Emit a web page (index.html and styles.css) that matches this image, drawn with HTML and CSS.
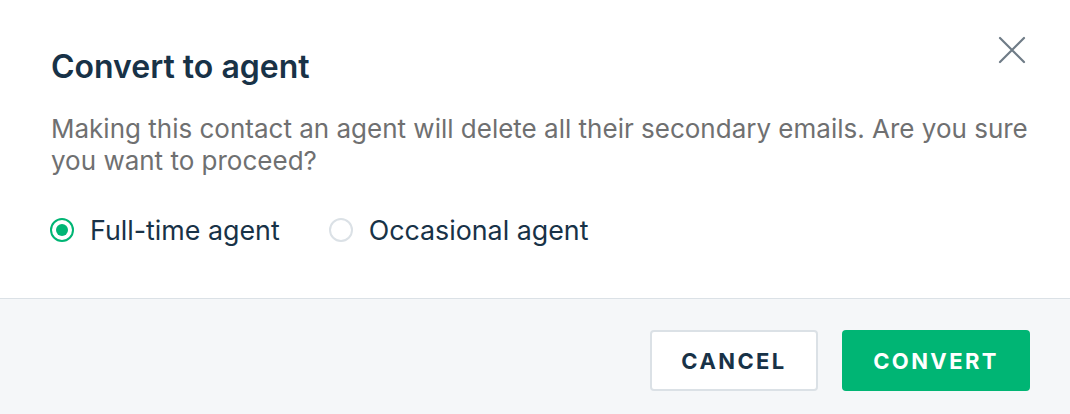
FILE: index.html
```html
<!DOCTYPE html>
<html>
	<head>
		<meta charset="UTF-8">
		<title>Convert to agent</title>
		<link rel="stylesheet" href="styles.css">
	</head>
	<body>
		<div class="modal">
			<div class="modal-body">
				<button class="close" type="button" aria-label="Close">
					<svg width="28" height="28" viewBox="0 0 28 28"><path d="M2 2L26 26M26 2L2 26" stroke="#6f7c87" stroke-width="2.2" stroke-linecap="round" fill="none"/></svg>
				</button>
				<h2 class="title">Convert to agent</h2>
				<p class="desc">Making this contact an agent will delete all their secondary emails. Are you sure you want to proceed?</p>
				<div class="options">
					<label class="option"><span class="radio checked"></span>Full-time agent</label>
					<label class="option"><span class="radio"></span>Occasional agent</label>
				</div>
			</div>
			<div class="modal-footer">
				<button class="btn btn-cancel" type="button">CANCEL</button>
				<button class="btn btn-primary" type="button">CONVERT</button>
			</div>
		</div>
	</body>
</html>
```

FILE: styles.css
```css
body{
	margin: 0;
	background: #fff;
	font-family: Inter, "Liberation Sans", sans-serif;
}
.modal{
	width: 1070px;
	height: 414px;
	display: flex;
	flex-direction: column;
}
.modal-body{
	position: relative;
	padding: 47px 36px 0 51px;
	height: 251px;
	border-bottom: 1px solid #dbe1e6;
}
.close{
	position: absolute;
	top: 36px;
	right: 44px;
	padding: 0;
	border: 0;
	background: none;
	width: 28px;
	height: 28px;
}
.title{
	margin: 0;
	font-size: 32px;
	font-weight: 600;
	line-height: 40px;
	color: #183247;
}
.desc{
	margin: 26px 0 0;
	font-size: 26px;
	line-height: 32px;
	color: #6f7071;
}
.options{
	display: flex;
	gap: 50px;
	margin-top: 35px;
}
.option{
	display: flex;
	align-items: center;
	gap: 16px;
	font-size: 26.8px;
	line-height: 36px;
	color: #183247;
}
.radio{
	width: 20px;
	height: 20px;
	border: 2px solid #dbe1e6;
	border-radius: 50%;
	display: flex;
	align-items: center;
	justify-content: center;
	margin-left: -1px;
}
.radio.checked{
	border-color: #00b574;
}
.radio.checked::after{
	content: "";
	width: 12px;
	height: 12px;
	border-radius: 50%;
	background: #00b574;
}
.modal-footer{
	flex: 1;
	background: #f5f7f9;
	display: flex;
	justify-content: flex-end;
	align-items: flex-start;
	gap: 24px;
	padding: 31px 40px 0 0;
}
.btn{
	height: 61px;
	border-radius: 4px;
	font-family: Inter, "Liberation Sans", sans-serif;
	font-size: 22px;
	font-weight: 700;
	letter-spacing: 2.4px;
	padding: 0;
}
.btn-cancel{
	width: 168px;
	background: #fff;
	border: 2px solid #dbe1e6;
	color: #183247;
}
.btn-primary{
	width: 188px;
	background: #00b574;
	border: 0;
	color: #fff;
}
```
